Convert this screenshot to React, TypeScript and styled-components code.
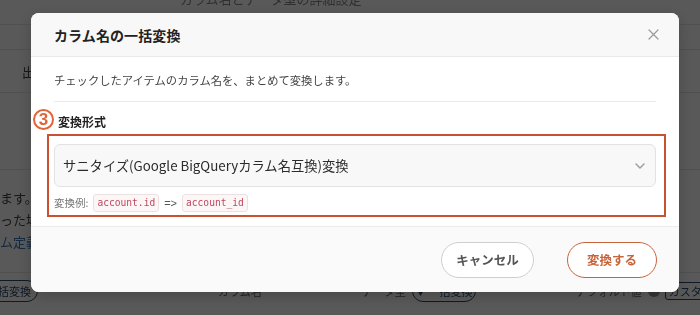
import React from "react";
import styled, { createGlobalStyle } from "styled-components";

const GlobalStyle = createGlobalStyle`
  html, body { margin: 0; padding: 0; }
  body {
    width: 700px;
    height: 315px;
    overflow: hidden;
    background: #ffffff;
    font-family: "Noto Sans CJK JP", "Noto Sans", sans-serif;
    color: #333;
  }
  * { box-sizing: border-box; }
`;

/* ---------- page behind the dialog ---------- */
const Page = styled.div`
  width: 700px;
  height: 315px;
  overflow: hidden;
  display: flex;
  flex-direction: column;
  font-size: 12px;
  color: #333;
  filter: blur(0.5px);
`;

const PageRow = styled.div<{ $h: number; $line?: boolean }>`
  height: ${(p) => p.$h}px;
  flex: none;
  display: flex;
  align-items: center;
  border-bottom: ${(p) => (p.$line ? "1px solid #e6e6e6" : "none")};
`;

const PageText = styled.span<{ $x: number; $blue?: boolean; $faint?: boolean }>`
  margin-left: ${(p) => p.$x}px;
  color: ${(p) => (p.$blue ? "#3a78bd" : p.$faint ? "#888" : "#444")};
  white-space: nowrap;
  font-size: 13px;
`;

const Para = styled.div`
  flex: none;
  display: flex;
  flex-direction: column;
  gap: 2px;
  padding-top: 18px;
  height: 103px;
  border-bottom: 1px solid #e6e6e6;
  font-size: 13px;
  line-height: 20px;
  white-space: nowrap;
`;

const BottomRow = styled.div`
  flex: none;
  display: flex;
  align-items: center;
  height: 36px;
  font-size: 11px;
`;

const PagePill = styled.span<{ $x: number; $w: number }>`
  margin-left: ${(p) => p.$x}px;
  width: ${(p) => p.$w}px;
  height: 22px;
  border: 1px solid #2c4a6b;
  border-radius: 11px;
  display: inline-flex;
  align-items: center;
  justify-content: center;
  color: #2c4a6b;
  font-size: 11px;
  flex: none;
`;

const PageSmall = styled.span<{ $x: number }>`
  margin-left: ${(p) => p.$x}px;
  color: #666;
  font-size: 11px;
  white-space: nowrap;
`;

const PageTag = styled.span`
  margin-left: 5px;
  border: 1px solid #2c4a6b;
  border-radius: 3px;
  padding: 0 3px;
  color: #2c4a6b;
  font-size: 11px;
  white-space: nowrap;
`;

const Dot = styled.span`
  margin-left: 6px;
  width: 12px;
  height: 12px;
  border-radius: 50%;
  background: #999;
  flex: none;
`;

/* ---------- overlay + dialog ---------- */
const Overlay = styled.div`
  position: fixed;
  inset: 0;
  background: rgba(0, 0, 0, 0.65);
  display: flex;
  align-items: flex-start;
  padding: 13px 0 0 31px;
`;

const Modal = styled.div`
  width: 648px;
  height: 279px;
  background: #fff;
  border-radius: 8px;
  overflow: hidden;
  display: flex;
  flex-direction: column;
  box-shadow: 0 4px 16px rgba(0, 0, 0, 0.2);
`;

const Header = styled.div`
  height: 44px;
  flex: none;
  display: flex;
  align-items: center;
  justify-content: space-between;
  padding: 0 19px 0 23px;
  background: #f8f8f8;
  border-bottom: 1px solid #e9e9e9;
`;

const Title = styled.h2`
  margin: 0;
  font-size: 14px;
  font-weight: 700;
  color: #222;
  letter-spacing: 0.1px;
`;

const CloseButton = styled.button`
  width: 14px;
  height: 14px;
  padding: 0;
  border: none;
  background: none;
  display: flex;
  align-items: center;
  justify-content: center;
  cursor: pointer;
`;

const Body = styled.div`
  flex: 1;
  padding: 12px 23px 0 23px;
  display: flex;
  flex-direction: column;
`;

const Description = styled.p`
  margin: 0;
  font-size: 11.3px;
  line-height: 22px;
  color: #444;
  padding-bottom: 10px;
  border-bottom: 1px solid #ececec;
`;

const LabelRow = styled.div`
  position: relative;
  display: flex;
  align-items: center;
  height: 22px;
  margin-top: 8px;
`;

const Label = styled.span`
  margin-left: 4px;
  font-size: 12px;
  font-weight: 700;
  color: #222;
`;

const StepBadge = styled.span`
  position: absolute;
  left: -21px;
  top: -1px;
  width: 21px;
  height: 21px;
  border-radius: 50%;
  border: 2px solid #e0643a;
  background: #fff;
  color: #e0643a;
  font-family: "Liberation Sans", Arial, sans-serif;
  font-weight: 700;
  font-size: 17px;
  line-height: 17px;
  display: flex;
  align-items: center;
  justify-content: center;
`;

const Highlight = styled.div`
  margin: 2px -10px 0 -7px;
  border: 2px solid #c9512f;
  padding: 8px 8px 3px 5px;
  display: flex;
  flex-direction: column;
  gap: 6px;
`;

const SelectBox = styled.div`
  height: 43px;
  border: 1px solid #e2e2e4;
  border-radius: 6px;
  background: #f8f8f9;
  display: flex;
  align-items: center;
  justify-content: space-between;
  padding: 0 10px 0 8px;
  font-size: 13.3px;
  color: #2a2a2a;
`;

const SelectText = styled.span`
  font-family: "Noto Sans CJK JP", "Noto Sans", sans-serif;
`;

const Example = styled.div`
  display: flex;
  align-items: center;
  gap: 5px;
  height: 19px;
  font-size: 10.5px;
  color: #777;
`;

const Code = styled.code`
  font-family: "DejaVu Sans Mono", "Liberation Mono", monospace;
  font-size: 9.6px;
  color: #c0475f;
  background: #fcf6f7;
  border: 1px solid #ebe0e2;
  border-radius: 3px;
  padding: 0 3px;
  height: 18px;
  display: inline-flex;
  align-items: center;
`;

const Arrow = styled.span`
  font-family: "Liberation Sans", Arial, sans-serif;
  font-size: 11px;
  color: #555;
`;

const Footer = styled.div`
  height: 66px;
  flex: none;
  margin-top: auto;
  background: #fafafa;
  border-top: 1px solid #ececec;
  display: flex;
  align-items: center;
  justify-content: flex-end;
  gap: 33px;
  padding-right: 22px;
`;

const Button = styled.button<{ $primary?: boolean }>`
  height: 36px;
  width: ${(p) => (p.$primary ? 90 : 93)}px;
  border-radius: 18px;
  border: 1px solid ${(p) => (p.$primary ? "#c8643b" : "#cfcfcf")};
  background: #fff;
  color: ${(p) => (p.$primary ? "#c8643b" : "#555")};
  font-family: "Noto Sans CJK JP", "Noto Sans", sans-serif;
  font-size: 12.5px;
  font-weight: 700;
  display: flex;
  align-items: center;
  justify-content: center;
  cursor: pointer;
`;

export default function App() {
  return (
    <>
      <GlobalStyle />
      <Page>
        <PageRow $h={25} $line>
          <PageText $x={180} $faint style={{ marginTop: -28 }}>
            カラム名とデータ型の詳細設定
          </PageText>
        </PageRow>
        <PageRow $h={25} $line />
        <PageRow $h={43} $line>
          <PageText $x={22}>出力</PageText>
        </PageRow>
        <PageRow $h={77} $line />
        <Para>
          <PageText $x={0}>ます。この設定は転送先のカラム名になります。</PageText>
          <PageText $x={0}>った場合は変換されます。</PageText>
          <PageText $x={0} $blue>
            ム定義の詳細
          </PageText>
        </Para>
        <BottomRow>
          <PagePill $x={-20} $w={58}>
            一括変換
          </PagePill>
          <PageSmall $x={180}>カラム名</PageSmall>
          <PageSmall $x={100}>データ型</PageSmall>
          <PagePill $x={6} $w={64}>
            ▼ 一括変換
          </PagePill>
          <PageSmall $x={100}>デフォルト値</PageSmall>
          <Dot />
          <PageTag>カスタム変換</PageTag>
        </BottomRow>
      </Page>

      <Overlay>
        <Modal role="dialog" aria-label="カラム名の一括変換">
          <Header>
            <Title>カラム名の一括変換</Title>
            <CloseButton aria-label="閉じる">
              <svg width="11" height="11" viewBox="0 0 11 11">
                <path
                  d="M1 1 L10 10 M10 1 L1 10"
                  stroke="#9a9a9a"
                  strokeWidth="1.2"
                  strokeLinecap="round"
                />
              </svg>
            </CloseButton>
          </Header>
          <Body>
            <Description>
              チェックしたアイテムのカラム名を、まとめて変換します。
            </Description>
            <LabelRow>
              <StepBadge>3</StepBadge>
              <Label>変換形式</Label>
            </LabelRow>
            <Highlight>
              <SelectBox>
                <SelectText>サニタイズ(Google BigQueryカラム名互換)変換</SelectText>
                <svg width="10" height="6" viewBox="0 0 10 6">
                  <path
                    d="M1 1 L5 5 L9 1"
                    fill="none"
                    stroke="#9b9b9b"
                    strokeWidth="1.4"
                    strokeLinecap="round"
                    strokeLinejoin="round"
                  />
                </svg>
              </SelectBox>
              <Example>
                <span>変換例:</span>
                <Code>account.id</Code>
                <Arrow>=&gt;</Arrow>
                <Code>account_id</Code>
              </Example>
            </Highlight>
          </Body>
          <Footer>
            <Button>キャンセル</Button>
            <Button $primary>変換する</Button>
          </Footer>
        </Modal>
      </Overlay>
    </>
  );
}
